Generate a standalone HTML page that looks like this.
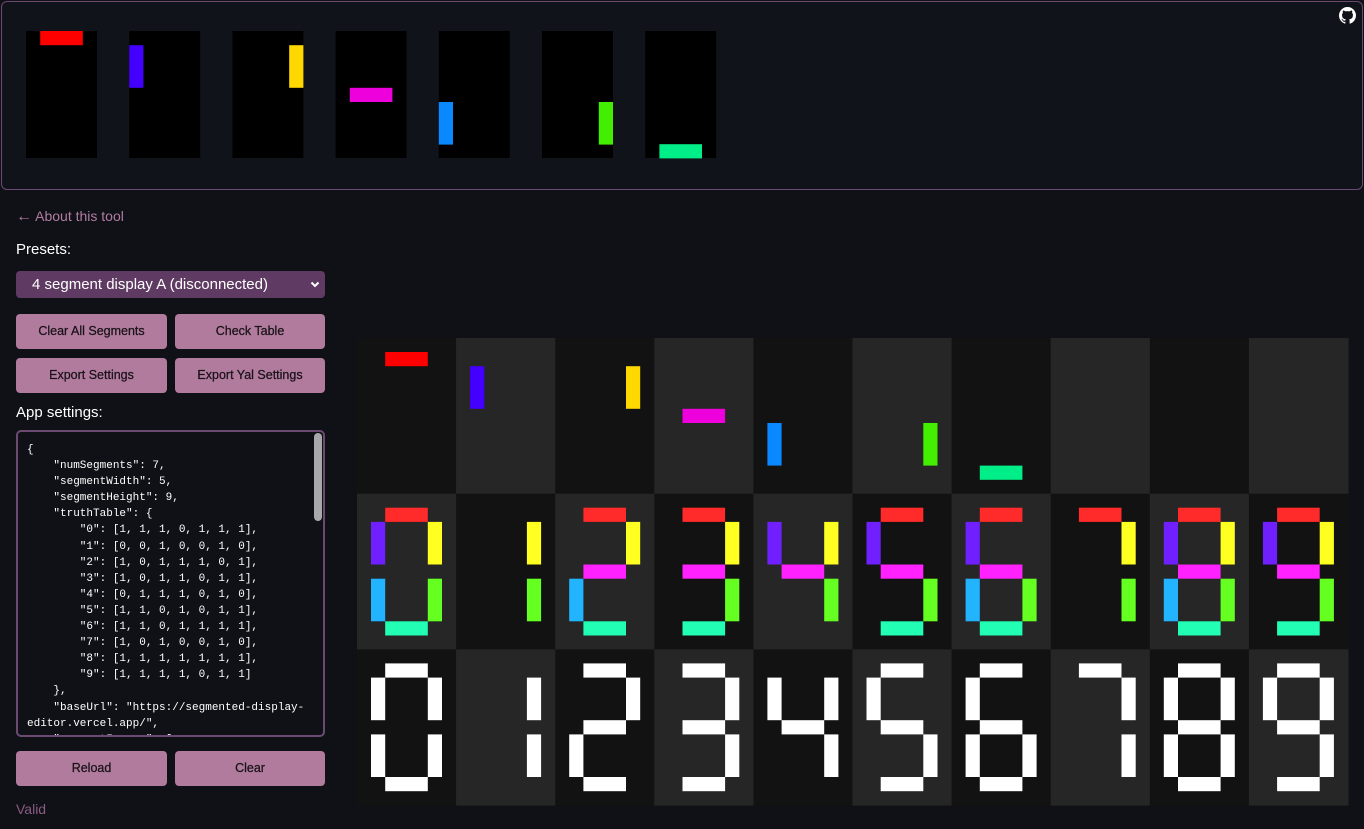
<!DOCTYPE html>
<html><head><meta charset="utf-8"><style>
body{margin:0;width:1364px;height:829px;background:#0f1117;font-family:"Liberation Sans",sans-serif;overflow:hidden;position:relative;color:#fff}
.panel{position:absolute;left:1px;top:1px;width:1360px;height:187px;border:1px solid #6b4a72;border-radius:6px;background:#10131a}
.a{position:absolute}
.btn{position:absolute;background:#b07b9d;color:#1a1218;border-radius:4px;font-size:12.5px;font-weight:500;-webkit-text-stroke:0.25px #1a1218;text-align:center;line-height:35px;width:151px;height:35px}
pre{margin:0;font-family:"Liberation Mono","DejaVu Sans Mono",monospace;font-size:11px;line-height:16.1px;color:#fff}
</style></head><body>
<div class="panel"></div>
<svg class="a" style="left:1339px;top:7px" width="17" height="17" viewBox="0 0 16 16"><path fill="#fff" d="M8 0C3.58 0 0 3.58 0 8c0 3.54 2.290 6.53 5.47 7.59.4.07.55-.17.55-.38v-1.33c-2.23.48-2.7-1.07-2.7-1.07-.36-.92-.89-1.170-.89-1.17-.73-.5.05-.49.05-.49.8.06 1.23.83 1.23.83.71 1.22 1.87.87 2.33.66.07-.52.28-.87.5-1.07-1.78-.2-3.64-.89-3.64-3.95 0-.87.31-1.59.82-2.15-.08-.2-.36-1.02.08-2.12 0 0 .67-.21 2.2.82a7.6 7.6 0 014 0c1.53-1.04 2.2-.82 2.2-.82.44 1.1.16 1.92.08 2.12.51.56.82 1.27.82 2.150 0 3.07-1.87 3.75-3.65 3.95.29.25.54.73.54 1.48v2.2c0 .21.15.46.55.38A8 8 0 0016 8c0-4.42-3.58-8-8-8z"/></svg>
<svg class="a" style="left:0;top:0" width="1364" height="829">
<g>
<rect x="26" y="31" width="71" height="127" fill="#000"/><rect x="40.2" y="31" width="42.6" height="14.2" fill="#ff0000"/>
<rect x="129.2" y="31" width="71" height="127" fill="#000"/><rect x="129.2" y="45.2" width="14.2" height="42.6" fill="#4400ff"/>
<rect x="232.4" y="31" width="71" height="127" fill="#000"/><rect x="289.2" y="45.2" width="14.2" height="42.6" fill="#ffd800"/>
<rect x="335.6" y="31" width="71" height="127" fill="#000"/><rect x="349.8" y="87.8" width="42.6" height="14.2" fill="#ee00dd"/>
<rect x="438.8" y="31" width="71" height="127" fill="#000"/><rect x="438.8" y="102" width="14.2" height="42.6" fill="#0a88ff"/>
<rect x="542" y="31" width="71" height="127" fill="#000"/><rect x="598.8" y="102" width="14.2" height="42.6" fill="#44ee00"/>
<rect x="645.2" y="31" width="71" height="127" fill="#000"/><rect x="659.4" y="144.2" width="42.6" height="14.2" fill="#00ee88"/>
</g>
<g id="grid"></g>
</svg>
<div class="a" style="left:16px;top:208px;font-size:14px;color:#b27ca2"><span style="font-size:16px">←</span> About this tool</div>
<div class="a" style="left:16px;top:241px;font-size:15px">Presets:</div>
<div class="a" style="left:16px;top:271px;width:309px;height:27px;background:#5f3b63;border-radius:4px;font-size:15px;line-height:27px"><span style="margin-left:16px">4 segment display A (disconnected)</span><svg class="a" style="right:5px;top:10px" width="10" height="7" viewBox="0 0 10 7"><path d="M1.5 1.5 5 5 8.5 1.5" stroke="#fff" stroke-width="2" fill="none"/></svg></div>
<div class="btn" style="left:16px;top:314px">Clear All Segments</div>
<div class="btn" style="left:175px;top:314px;width:150px">Check Table</div>
<div class="btn" style="left:16px;top:358px">Export Settings</div>
<div class="btn" style="left:175px;top:358px;width:150px">Export Yal Settings</div>
<div class="a" style="left:16px;top:404px;font-size:15px">App settings:</div>
<div class="a" style="left:16px;top:430px;width:305px;height:303px;border:2px solid #6b4a72;border-radius:5px;overflow:hidden;background:#0f1117">
<pre style="position:absolute;left:9px;top:10px">{
    "numSegments": 7,
    "segmentWidth": 5,
    "segmentHeight": 9,
    "truthTable": {
        "0": [1, 1, 1, 0, 1, 1, 1],
        "1": [0, 0, 1, 0, 0, 1, 0],
        "2": [1, 0, 1, 1, 1, 0, 1],
        "3": [1, 0, 1, 1, 0, 1, 1],
        "4": [0, 1, 1, 1, 0, 1, 0],
        "5": [1, 1, 0, 1, 0, 1, 1],
        "6": [1, 1, 0, 1, 1, 1, 1],
        "7": [1, 0, 1, 0, 0, 1, 0],
        "8": [1, 1, 1, 1, 1, 1, 1],
        "9": [1, 1, 1, 1, 0, 1, 1]
    },
    "baseUrl": "https://segmented-display-
editor.vercel.app/",
    "segmentImages": [</pre>
<div class="a" style="right:1px;top:1px;width:8px;height:88px;background:#a8a8a8;border-radius:4px"></div>
</div>
<div class="btn" style="left:16px;top:751px">Reload</div>
<div class="btn" style="left:175px;top:751px;width:150px">Clear</div>
<div class="a" style="left:16px;top:801px;font-size:14px;color:#8b5b82">Valid</div>
<script>
var T=[[1,1,1,0,1,1,1],[0,0,1,0,0,1,0],[1,0,1,1,1,0,1],[1,0,1,1,0,1,1],[0,1,1,1,0,1,0],[1,1,0,1,0,1,1],[1,1,0,1,1,1,1],[1,0,1,0,0,1,0],[1,1,1,1,1,1,1],[1,1,1,1,0,1,1]];
var S=[[14.2,0,42.6,14.2],[0,14.2,14.2,42.6],[56.8,14.2,14.2,42.6],[14.2,56.8,42.6,14.2],[0,71,14.2,42.6],[56.8,71,14.2,42.6],[14.2,113.6,42.6,14.2]];
var C0=["#ff0000","#4400ff","#ffd800","#ee00dd","#0a88ff","#44ee00","#00ee88"];
var C1=["#ff2a2a","#7020ff","#ffff22","#ff22ff","#22b4ff","#66ff22","#22ffb4"];
var h="";
for(var r=0;r<3;r++)for(var c=0;c<10;c++){
var x=357+c*99.1,y=338+r*155.7;
h+='<rect x="'+x+'" y="'+y+'" width="99.6" height="156.2" fill="'+((r+c)%2?"#262626":"#121212")+'"/>';
for(var k=0;k<7;k++){var on,col;
if(r==0){on=(c==k);col=C0[k];}else{on=T[c][k];col=r==1?C1[k]:"#fff";}
if(on){var s=S[k];h+='<rect x="'+(x+14+s[0])+'" y="'+(y+14+s[1])+'" width="'+s[2]+'" height="'+s[3]+'" fill="'+col+'"/>';}}
}
document.getElementById("grid").innerHTML=h;
</script>
</body></html>
